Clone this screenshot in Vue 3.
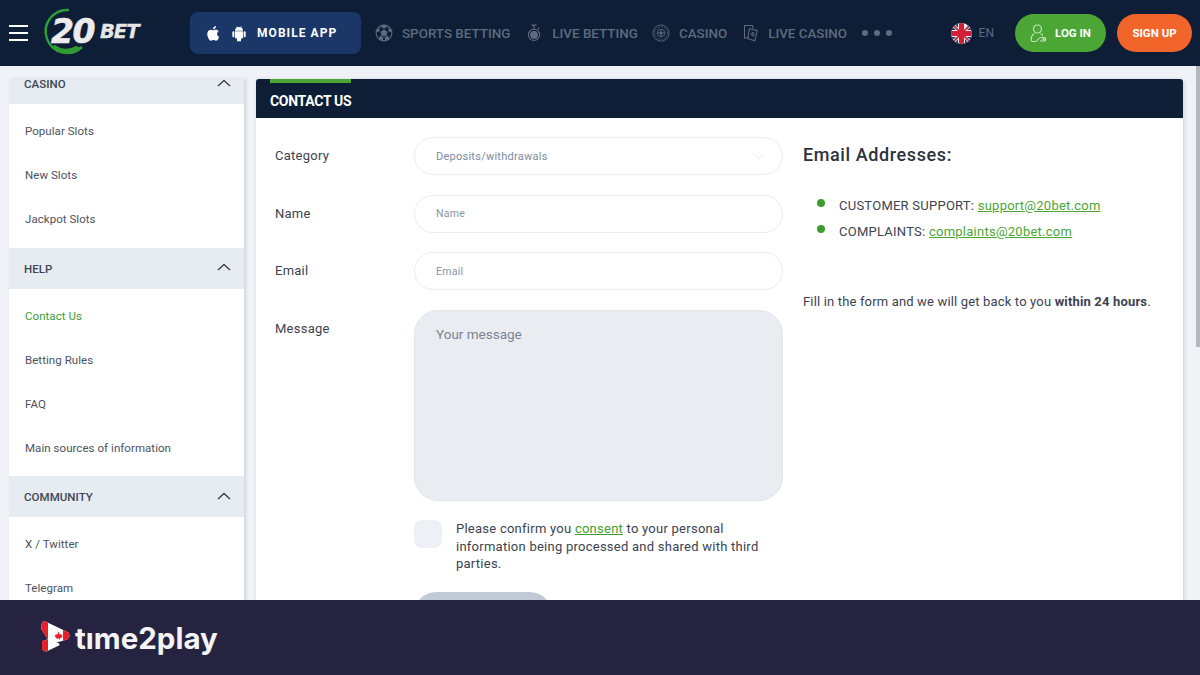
<script setup>
const groups = [
  { title: 'CASINO', items: ['Popular Slots', 'New Slots', 'Jackpot Slots'] },
  { title: 'HELP', items: ['Contact Us', 'Betting Rules', 'FAQ', 'Main sources of information'] },
  { title: 'COMMUNITY', items: ['X / Twitter', 'Telegram', 'Instagram'] },
]
</script>

<template>
  <div class="page">
    <header class="top">
      <div class="burger"><i></i><i></i><i></i></div>
      <div class="logo">
        <svg class="ring" width="52" height="50" viewBox="0 0 52 50">
          <path d="M28 3 A21.500 21.500 0 1 0 41 40" fill="none" stroke="#2f9b34" stroke-width="2.500"/>
          <path d="M10 40 A21 21 0 0 0 40 41 L35 39 A19 19 0 0 1 14 38 Z" fill="#2f9b34"/>
        </svg>
        <span class="twenty">20</span><span class="bet">BET</span>
      </div>
      <button class="mobile">
        <svg width="17" height="19" viewBox="0 0 24 24" fill="#fff"><path d="M17.050 12.600c0-2.600 2.100-3.800 2.200-3.900-1.200-1.800-3.100-2-3.700-2-1.600-.2-3.100.9-3.900.9s-2.100-.9-3.400-.9c-1.700 0-3.300 1-4.200 2.600-1.800 3.100-.5 7.700 1.300 10.300.9 1.200 1.900 2.600 3.300 2.600 1.300-.1 1.800-.9 3.400-.9s2 .9 3.400.8c1.400 0 2.300-1.200 3.200-2.500 1-1.400 1.400-2.800 1.400-2.900-.1 0-2.900-1.100-3-4.100zM14.400 4.700c.7-.9 1.200-2.100 1.100-3.400-1 0-2.300.7-3 1.500-.7.800-1.300 2-1.100 3.200 1.100.1 2.300-.5 3-1.300z"/></svg>
        <svg class="droid" width="16" height="17" viewBox="0 0 24 24" fill="#fff"><path d="M6 8.500h12v9.500a1.500 1.500 0 0 1-1.500 1.500H15v3a1.500 1.500 0 0 1-3 0v-3h0v3a1.500 1.500 0 0 1-3 0v-3H7.500A1.500 1.500 0 0 1 6 18zM3.500 8.500A1.500 1.500 0 0 1 5 10v6a1.500 1.500 0 0 1-3 0v-6a1.500 1.500 0 0 1 1.500-1.500zm17 0A1.500 1.500 0 0 1 22 10v6a1.500 1.500 0 0 1-3 0v-6a1.500 1.500 0 0 1 1.500-1.500zM6 7.700C6 5.500 7.300 3.700 9.200 2.800L8 1l.6-.4L10 2.500a7 7 0 0 1 4 0L15.400.6l.6.4-1.200 1.800C16.700 3.700 18 5.500 18 7.700z"/></svg>
        <span>MOBILE APP</span>
      </button>
      <nav class="nav">
        <a class="n1">
          <svg width="18" height="18" viewBox="0 0 24 24" fill="none" stroke="#5f6b7e" stroke-width="1.500"><circle cx="12" cy="12" r="10.500"/><path fill="#5f6b7e" d="M12 8l3.800 2.800-1.400 4.500H9.600l-1.400-4.500z"/><path fill="#5f6b7e" d="M12 1.500l-3 2 3 2 3-2zM2 9l3 1 .5-3.500zM22 9l-3 1-.5-3.500zM6 20l1-3.500 3.500 1.500-1 3.500zM18 20l-1-3.500-3.500 1.500 1 3.500z"/></svg>
          <span>SPORTS BETTING</span>
        </a>
        <a class="n2">
          <svg width="14" height="18" viewBox="0 0 18 24" fill="none" stroke="#5f6b7e" stroke-width="1.500"><circle cx="9" cy="14.500" r="7.500"/><circle cx="9" cy="14.500" r="4.500" fill="#5f6b7e"/><path d="M5.500 1.500h7M9 2v5M14 7l2-2"/></svg>
          <span>LIVE BETTING</span>
        </a>
        <a class="n3">
          <svg width="18" height="18" viewBox="0 0 24 24" fill="none" stroke="#5f6b7e" stroke-width="1.200"><circle cx="12" cy="12" r="10.800"/><circle cx="12" cy="12" r="8.400" stroke-dasharray="1.500 1"/><circle cx="12" cy="12" r="5"/><path stroke-width="1.800" d="M12 8.500v7M8.500 12h7"/></svg>
          <span>CASINO</span>
        </a>
        <a class="n4">
          <svg width="17" height="18" viewBox="0 0 24 24" fill="none" stroke="#5f6b7e" stroke-width="1.500"><path d="M10 19H3.500V1.500H15l.5 4"/><path d="M10.500 6l11 2.500-3.500 14.500-10-3z"/><path d="M15 11c2 1 2.500 2.500 1 5-2.500-.5-3.500-2-1-5z"/></svg>
          <span>LIVE CASINO</span>
        </a>
        <div class="dots"><i></i><i></i><i></i></div>
      </nav>
      <div class="lang">
        <svg width="21" height="21" viewBox="0 0 21 21">
          <defs><clipPath id="flagclip"><circle cx="10.500" cy="10.500" r="10.500"/></clipPath></defs>
          <g clip-path="url(#flagclip)">
            <rect width="21" height="21" fill="#f4f4f4"/>
            <path d="M0 0l21 21M21 0L0 21" stroke="#c9233b" stroke-width="1.600"/>
            <path d="M3 0h4v5zM14 0h4v4zM0 3l5 4H0zM0 14h5l-5 4zM21 3v4h-5zM21 14v4l-5-4zM7 21H3l4-5zM18 21h-4v-5z" fill="#26346f"/>
            <rect x="8" width="5" height="21" fill="#d41e36"/>
            <rect y="8" width="21" height="5" fill="#d41e36"/>
          </g>
        </svg>
        <span>EN</span>
      </div>
      <button class="btn login">
        <svg width="17" height="19" viewBox="0 0 17 19" fill="none" stroke="#c6e2bf" stroke-width="1.200"><circle cx="7.500" cy="5" r="4"/><path d="M1.500 17c-1-3 .5-6.500 3-7.500M10.500 9.500c1 .4 1.800 1.200 2.300 2.200"/><path d="M1.500 17.500h4c2 0 2-4 6-4h2.500a1.600 1.600 0 0 1 0 3.500h-4"/><circle cx="13.500" cy="15.200" r=".6"/></svg>
        <span>LOG IN</span>
      </button>
      <button class="btn signup">SIGN UP</button>
    </header>

    <div class="content">
      <aside class="side">
        <div class="side-inner">
          <section v-for="g in groups" :key="g.title">
            <div class="group-head">
              <span>{{ g.title }}</span>
              <svg width="14" height="8" viewBox="0 0 14 8" fill="none" stroke="#3b4350" stroke-width="1.500"><path d="M1 7l6-5.500L13 7"/></svg>
            </div>
            <ul>
              <li v-for="it in g.items" :key="it" :class="{ on: it === 'Contact Us' }">{{ it }}</li>
            </ul>
          </section>
        </div>
      </aside>

      <main class="card">
        <div class="card-head"><i class="tab"></i><h1>CONTACT US</h1></div>
        <div class="card-body">
          <form class="form" @submit.prevent>
            <div class="row"><label>Category</label>
              <div class="field">
                <span class="ph">Deposits/withdrawals</span>
                <svg width="12" height="7" viewBox="0 0 12 7" fill="none" stroke="#e9edf4" stroke-width="1"><path d="M1 1l5 5 5-5"/></svg>
              </div>
            </div>
            <div class="row"><label>Name</label><div class="field"><span class="ph sm">Name</span></div></div>
            <div class="row"><label>Email</label><div class="field"><span class="ph sm">Email</span></div></div>
            <div class="row"><label>Message</label><div class="area">Your message</div></div>
            <div class="consent">
              <span class="check"></span>
              <p>Please confirm you <a>consent</a> to your personal information being processed and shared with third parties.</p>
            </div>
            <div class="submit"></div>
          </form>
          <div class="info">
            <h2>Email Addresses:</h2>
            <ul>
              <li>CUSTOMER SUPPORT: <a>support@20bet.com</a></li>
              <li>COMPLAINTS: <a>complaints@20bet.com</a></li>
            </ul>
            <p>Fill in the form and we will get back to you <b>within 24 hours</b>.</p>
          </div>
        </div>
      </main>
      <div class="thumb"></div>
    </div>

    <footer class="foot">
      <svg class="mark" width="29" height="31" viewBox="0 0 29 31">
        <defs>
          <clipPath id="markL"><rect x="0" y="0" width="7" height="31"/></clipPath>
          <clipPath id="markR"><rect x="22" y="0" width="7" height="31"/></clipPath>
        </defs>
        <g stroke-linejoin="round" stroke-width="2">
          <path d="M3 1 L27 12.500 L27.500 15 L26 17.500 L12 21.500 L9.500 20.500 L1.500 8 L1 4z" fill="#fff" stroke="#fff"/>
          <path d="M3 1 L27 12.500 L27.500 15 L26 17.500 L12 21.500 L9.500 20.500 L1.500 8 L1 4z" fill="#e8202a" stroke="#e8202a" clip-path="url(#markL)"/>
          <path d="M3 1 L27 12.500 L27.500 15 L26 17.500 L12 21.500 L9.500 20.500 L1.500 8 L1 4z" fill="#e8202a" stroke="#e8202a" clip-path="url(#markR)"/>
          <path d="M2 21 L8 19 L17.500 23.500 L5 29.500 L2 28z" fill="#fff" stroke="#fff"/>
          <path d="M2 21 L8 19 L17.500 23.500 L5 29.500 L2 28z" fill="#e8202a" stroke="#e8202a" clip-path="url(#markL)"/>
        </g>
        <path d="M16 9.500l1 2 1.300-.6-.4 2.600 1.800-.8.400 1.300 1.400-.2-.5 1.700.7.500-2.900 1.400.2 1.400h-.6l-.2-1.300-3 .2.300-.9-2-1.300.9-.6-.3-1.500 1.500.4.300-1-.2-.1 1.200.7-.2-2.800z" fill="#e8202a"/>
      </svg>
      <span class="brand">tıme2play</span>
    </footer>
  </div>
</template>

<style>
html, body { margin: 0; padding: 0; overflow: hidden; }
</style>

<style scoped>
* { box-sizing: border-box; }
.page { width: 1200px; height: 675px; display: flex; flex-direction: column; overflow: hidden; background: #f0f2f8; font-family: Roboto, "Liberation Sans", sans-serif; color: #3b4350; }

.top { height: 66px; flex: none; display: flex; align-items: center; background: #0d1e36; padding: 0 8px 0 9px; white-space: nowrap; }
.burger { width: 19px; flex: none; display: flex; flex-direction: column; gap: 5px; }
.burger i { display: block; height: 2px; background: #fff; }
.logo { position: relative; width: 100px; height: 50px; margin-left: 15px; flex: none; }
.ring { position: absolute; left: -2px; top: -1px; }
.twenty { position: absolute; left: 8px; top: 5px; font: italic 700 33px/38px "DejaVu Sans", sans-serif; color: #ececec; letter-spacing: -1.500px; -webkit-text-stroke: .6px #ececec; }
.bet { position: absolute; left: 57px; top: 11px; font: italic 700 19.500px/26px "DejaVu Sans", sans-serif; color: #e6e6e6; letter-spacing: -1px; -webkit-text-stroke: .3px #e6e6e6; }
.mobile { width: 171px; height: 42px; margin-left: 47px; flex: none; display: flex; align-items: center; border: 0; border-radius: 8px; background: #1a3768; padding: 0 0 0 15px; color: #fff; font: 700 12px Roboto, sans-serif; letter-spacing: 1.050px; }
.droid { margin-left: 9px; }
.mobile span { margin-left: 10px; }
.nav { display: flex; align-items: center; margin-left: 14px; color: #5f6b7e; font-size: 13.400px; font-weight: 500; }
.nav a { display: flex; align-items: center; }
.n1 span { margin-left: 9px; }
.n2 { margin-left: 17px; }
.n2 span { margin-left: 11px; }
.n3 { margin-left: 14px; }
.n3 span { margin-left: 9px; }
.n4 { margin-left: 15px; }
.n4 span { margin-left: 9px; }
.dots { display: flex; gap: 6px; margin-left: 15px; }
.dots i { width: 6px; height: 6px; border-radius: 50%; background: #5f6b7e; }
.lang { display: flex; align-items: center; margin-left: auto; color: #5f6b7e; font-size: 12px; }
.lang span { margin-left: 7px; }
.btn { height: 38px; border: 0; border-radius: 19px; color: #fff; font: 700 11.500px Roboto, sans-serif; display: flex; align-items: center; justify-content: center; flex: none; }
.login { width: 91px; margin-left: 21px; background: #4ca635; gap: 8px; padding: 0; }
.signup { width: 75px; margin-left: 11px; background: #f1652a; padding: 0; }

.content { flex: 1; min-height: 0; display: flex; align-items: flex-start; padding: 13px 0 0 9px; overflow: hidden; position: relative; }
.side { width: 235px; height: 540px; flex: none; overflow: hidden; background: #fff; box-shadow: 2px 0 3px rgba(60,70,90,.16); }
.side-inner { margin-top: -16px; }
.group-head { height: 41px; display: flex; align-items: center; justify-content: space-between; background: #e7ebf2; padding: 1px 13px 0 15px; font-size: 11.500px; font-weight: 500; color: #3f4653; letter-spacing: .05px; }
.group-head svg { margin-top: -3px; }
.side ul { list-style: none; margin: 0; padding: 5px 0 6.500px; }
.side li { height: 44px; display: flex; align-items: center; padding-left: 16px; font-size: 11.500px; color: #4b525e; letter-spacing: .05px; }
.side li.on { color: #3d9e2e; }

.card { width: 927px; height: 560px; margin-left: 12px; flex: none; background: #fff; border-radius: 4px 4px 0 0; box-shadow: 1px 1px 4px rgba(60,70,90,.2); }
.card-head { position: relative; height: 39px; background: #0d1e36; border-radius: 3px 3px 0 0; padding: 14px 0 0 14px; }
.tab { position: absolute; left: 14px; top: 0; width: 81px; height: 4px; background: #4ca635; }
.card-head h1 { margin: 0; font-size: 14px; line-height: 16px; font-weight: 700; color: #fff; letter-spacing: -.3px; }
.card-body { display: flex; padding: 19px 0 0 19px; }
.form { width: 508px; flex: none; }
.row { display: flex; align-items: flex-start; margin-bottom: 19.500px; }
.row label { width: 139px; height: 38px; flex: none; font-size: 13px; line-height: 38px; color: #3b4350; letter-spacing: .25px; }
.field { width: 369px; height: 38px; display: flex; align-items: center; justify-content: space-between; border: 1px solid #e9edf4; border-radius: 19px; padding: 0 17px 0 21px; }
.ph { font-size: 11px; color: #7d8aa3; letter-spacing: .25px; }
.ph.sm { font-size: 10.500px; color: #8b95a8; }
.area { width: 369px; height: 191px; border-radius: 24px; background: #e9edf2; border: 1px solid #e1e6ec; padding: 15px 21px; font-size: 13.500px; line-height: 16px; color: #7b8492; }
.consent { display: flex; margin-top: 0; padding-left: 139px; }
.check { width: 28px; height: 28px; flex: none; border-radius: 8px; background: #edf0f4; }
.consent p { margin: 0 0 0 14px; width: 325px; font-size: 13px; line-height: 17.500px; color: #3b4350; letter-spacing: .25px; }
.consent a { color: #3d9e2e; text-decoration: underline; }
.submit { width: 138px; height: 44px; margin: 19px 0 0 139px; border-radius: 22px; background: #c1cbd8; }
.info { margin-left: 20px; width: 370px; }
.info h2 { margin: 7px 0 0; font-size: 18px; line-height: 22px; font-weight: 500; color: #2c3340; letter-spacing: .6px; }
.info ul { list-style: none; margin: 27px 0 0; padding: 0; }
.info li { position: relative; height: 26px; line-height: 25px; padding-left: 36px; font-size: 13px; color: #3b4350; letter-spacing: .25px; }
.info li::before { content: ""; position: absolute; left: 14px; top: 6px; width: 8px; height: 8px; border-radius: 50%; background: #3d9e2e; }
.info a { color: #4ca635; text-decoration: underline; }
.info p { margin: 48px 0 0; font-size: 13px; line-height: 18px; color: #3b4350; letter-spacing: .16px; white-space: nowrap; }
.info b { font-weight: 700; }
.thumb { position: absolute; right: 0; top: -6px; width: 4px; height: 287px; background: #b5b7bb; }

.foot { height: 75px; flex: none; display: flex; align-items: center; padding: 0 0 0 41px; background: #262340; position: relative; }
.mark { margin-top: -2px; flex: none; }
.brand { margin-left: 5px; font: 700 29.500px/32px Inter, sans-serif; color: #f4f4f6; letter-spacing: 0; }
</style>
